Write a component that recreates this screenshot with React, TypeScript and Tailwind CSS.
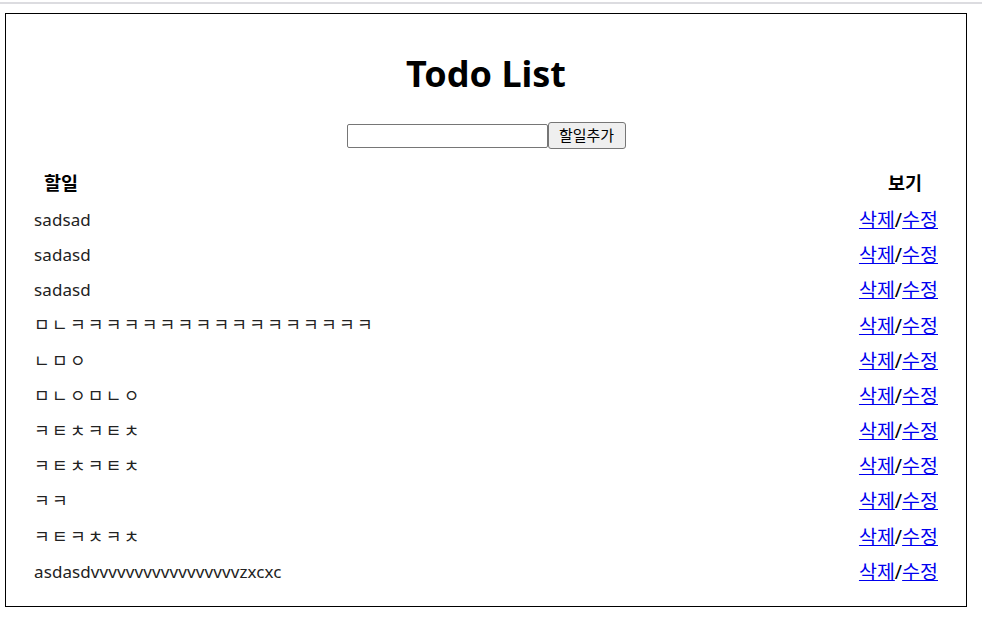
import React from "react";

const items = [
  "sadsad",
  "sadasd",
  "sadasd",
  "ㅁㄴㅋㅋㅋㅋㅋㅋㅋㅋㅋㅋㅋㅋㅋㅋㅋㅋㅋ",
  "ㄴㅁㅇ",
  "ㅁㄴㅇㅁㄴㅇ",
  "ㅋㅌㅊㅋㅌㅊ",
  "ㅋㅌㅊㅋㅌㅊ",
  "ㅋㅋ",
  "ㅋㅌㅋㅊㅋㅊ",
  "asdasdvvvvvvvvvvvvvvvvvzxcxc",
];

export default function App() {
  return (
    <div
      className="w-[982px] h-[636px] bg-white overflow-hidden"
      style={{ fontFamily: '"Noto Sans", "Noto Sans CJK KR", sans-serif' }}
    >
      <div className="pt-[2px]">
        <div className="h-[2px] bg-[#dcdce0]" />
      </div>
      <div className="mt-[9px] ml-[5px] w-[962px] h-[594px] border border-black">
        <h1 className="text-center text-[36px] font-bold text-black leading-none mt-[42px]">
          Todo List
        </h1>
        <div className="flex justify-center items-center mt-[30px]">
          <input
            className="w-[201px] h-[24px] border border-[#767676] rounded-[2px] bg-white"
            type="text"
          />
          <button className="h-[27px] w-[78px] border border-[#767676] rounded-[3px] bg-[#efefef] text-[15px] text-black leading-none">
            할일추가
          </button>
        </div>
        <div className="flex justify-between mt-[22px] text-[18.5px] font-bold text-black leading-none h-[24px] items-center">
          <span className="ml-[38px]">할일</span>
          <span className="mr-[44px]">보기</span>
        </div>
        <div className="mt-[7px] flex flex-col">
          {items.map((t, i) => (
            <div
              key={i}
              className="flex justify-between items-center h-[35.2px] text-[17px]"
            >
              <span
                className={
                  /[ㄱ-ㅎ]/.test(t)
                    ? "ml-[28px] text-[#222] tracking-[2.3px]"
                    : "ml-[28px] text-[#222] tracking-[0.1px]"
                }
              >
                {t}
              </span>
              <span className="mr-[28px] text-[19.5px] text-black">
                <a href="#" className="text-[#0000ee] underline">
                  삭제
                </a>
                /
                <a href="#" className="text-[#0000ee] underline">
                  수정
                </a>
              </span>
            </div>
          ))}
        </div>
      </div>
    </div>
  );
}
